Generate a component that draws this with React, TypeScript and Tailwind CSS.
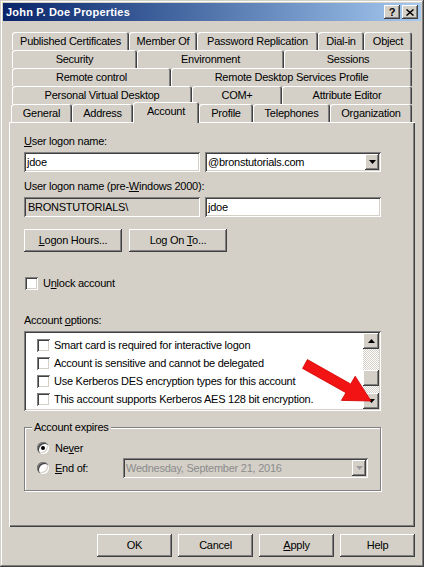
import React from "react";

const raised =
  "shadow-[inset_-1px_-1px_0_#404040,inset_1px_1px_0_#ffffff,inset_-2px_-2px_0_#808080,inset_2px_2px_0_#d4d0c8]";
const sunken =
  "shadow-[inset_1px_1px_0_#808080,inset_-1px_-1px_0_#ffffff,inset_2px_2px_0_#404040,inset_-2px_-2px_0_#d4d0c8]";
const checker =
  "bg-[image:repeating-conic-gradient(#ffffff_0%_25%,#d4d0c8_0%_50%)] bg-[length:2px_2px]";

function Tab({ label, w, selected }: { label: string; w: string; selected?: boolean }) {
  return (
    <div
      className={`${w} ${
        selected ? "h-[21px] -mb-[1px] relative z-10 pb-[3px]" : "h-[18px]"
      } shrink-0 flex items-center justify-center rounded-t-[3px] bg-[#d4d0c8] whitespace-nowrap shadow-[inset_1px_1px_0_#ffffff,inset_-1px_0_0_#404040,inset_-2px_0_0_#808080]`}
    >
      {label}
    </div>
  );
}

function Check() {
  return <div className={`w-[13px] h-[13px] shrink-0 bg-white ${sunken}`} />;
}

function Radio({ checked }: { checked?: boolean }) {
  return (
    <div className="w-[12px] h-[12px] shrink-0 rounded-full bg-white shadow-[inset_1px_1px_0_#808080,inset_2px_2px_0_#404040,inset_-1px_-1px_0_#ffffff,inset_-2px_-2px_0_#d4d0c8] flex items-center justify-center">
      {checked && <div className="w-[4px] h-[4px] rounded-full bg-black" />}
    </div>
  );
}

function Tri({ up, color = "#000000" }: { up?: boolean; color?: string }) {
  return (
    <svg width="7" height="4" viewBox="0 0 7 4">
      <polygon points={up ? "0,4 7,4 3.5,0" : "0,0 7,0 3.5,4"} fill={color} />
    </svg>
  );
}

function Btn({ children, w }: { children: React.ReactNode; w: string }) {
  return (
    <div className={`${w} h-[23px] shrink-0 flex items-center justify-center bg-[#d4d0c8] ${raised}`}>
      {children}
    </div>
  );
}

export default function App() {
  return (
    <div className="relative w-[424px] h-[567px] bg-[#d4d0c8] p-[3px] flex flex-col font-['Liberation_Sans',Arial,sans-serif] text-[11px] leading-[13px] tracking-[-0.25px] text-black shadow-[inset_-1px_-1px_0_#404040,inset_1px_1px_0_#d4d0c8,inset_-2px_-2px_0_#808080,inset_2px_2px_0_#ffffff]">
      {/* Title bar */}
      <div className="h-[18px] shrink-0 flex items-center justify-between pl-[3px] pr-[3px] bg-linear-to-r from-[#0a246a] to-[#a6caf0]">
        <span className="text-white font-bold tracking-[0.2px]">John P. Doe Properties</span>
        <div className="flex gap-[2px]">
          <div className={`w-[16px] h-[14px] bg-[#d4d0c8] flex items-center justify-center font-bold text-[11px] ${raised}`}>
            ?
          </div>
          <div className={`w-[16px] h-[14px] bg-[#d4d0c8] flex items-center justify-center ${raised}`}>
            <svg width="8" height="7" viewBox="0 0 8 7">
              <path d="M0.5 0.5 L7.5 6.5 M7.5 0.5 L0.5 6.5" stroke="#000" strokeWidth="1.5" />
            </svg>
          </div>
        </div>
      </div>

      {/* Tabs */}
      <div className="mt-[11px] ml-[6px] w-[406px] flex flex-col">
        <div className="ml-[3px] flex h-[18px]">
          <Tab label="Published Certificates" w="w-[117px]" />
          <Tab label="Member Of" w="w-[68px]" />
          <Tab label="Password Replication" w="w-[121px]" />
          <Tab label="Dial-in" w="w-[46px]" />
          <Tab label="Object" w="w-[48px]" />
        </div>
        <div className="ml-[3px] flex h-[18px]">
          <Tab label="Security" w="w-[125px]" />
          <Tab label="Environment" w="w-[147px]" />
          <Tab label="Sessions" w="w-[128px]" />
        </div>
        <div className="ml-[3px] flex h-[18px]">
          <Tab label="Remote control" w="w-[159px]" />
          <Tab label="Remote Desktop Services Profile" w="w-[241px]" />
        </div>
        <div className="ml-[3px] flex h-[18px]">
          <Tab label="Personal Virtual Desktop" w="w-[180px]" />
          <Tab label="COM+" w="w-[90px]" />
          <Tab label="Attribute Editor" w="w-[130px]" />
        </div>
        <div className="ml-[2px] flex h-[18px] items-end">
          <Tab label="General" w="w-[61px]" />
          <Tab label="Address" w="w-[61px]" />
          <Tab label="Account" w="w-[66px]" selected />
          <Tab label="Profile" w="w-[54px]" />
          <Tab label="Telephones" w="w-[77px]" />
          <Tab label="Organization" w="w-[82px]" />
        </div>

        {/* Panel */}
        <div className="h-[405px] pl-[15px] pt-[13px] flex flex-col shadow-[inset_1px_1px_0_#ffffff,inset_-1px_-1px_0_#404040,inset_-2px_-2px_0_#808080]">
          <div>
            <u>U</u>ser logon name:
          </div>
          <div className="mt-[4px] flex gap-[5px]">
            <div className={`w-[176px] h-[20px] bg-white pl-[3px] flex items-center ${sunken}`}>jdoe</div>
            <div className={`w-[176px] h-[20px] bg-white pl-[3px] pr-[2px] flex items-center justify-between ${sunken}`}>
              <span>@bronstutorials.com</span>
              <div className={`w-[14px] h-[16px] bg-[#d4d0c8] flex items-center justify-center ${raised}`}>
                <Tri />
              </div>
            </div>
          </div>
          <div className="mt-[8px]">
            User logon name (pre-<u>W</u>indows 2000):
          </div>
          <div className="mt-[4px] flex gap-[5px]">
            <div className={`w-[176px] h-[20px] bg-[#d4d0c8] pl-[4px] flex items-center ${sunken}`}>BRONSTUTORIALS\</div>
            <div className={`w-[176px] h-[20px] bg-white pl-[3px] flex items-center ${sunken}`}>jdoe</div>
          </div>
          <div className="mt-[12px] flex gap-[7px]">
            <Btn w="w-[98px]">
              <span>
                <u>L</u>ogon Hours...
              </span>
            </Btn>
            <Btn w="w-[98px]">
              <span>
                Log On <u>T</u>o...
              </span>
            </Btn>
          </div>
          <div className="mt-[25px] ml-[1px] flex items-center gap-[5px] h-[13px]">
            <Check />
            <span>
              U<u>n</u>lock account
            </span>
          </div>
          <div className="mt-[24px]">
            Account <u>o</u>ptions:
          </div>
          <div className={`mt-[4px] w-[357px] h-[80px] bg-white p-[2px] flex ${sunken}`}>
            <div className="flex-1 pl-[11px] pt-[3px] flex flex-col">
              {[
                "Smart card is required for interactive logon",
                "Account is sensitive and cannot be delegated",
                "Use Kerberos DES encryption types for this account",
                "This account supports Kerberos AES 128 bit encryption.",
              ].map((t) => (
                <div key={t} className="h-[18px] flex items-center gap-[4px] whitespace-nowrap">
                  <Check />
                  <span>{t}</span>
                </div>
              ))}
            </div>
            <div className="w-[16px] flex flex-col">
              <div className={`h-[16px] bg-[#d4d0c8] flex items-center justify-center ${raised}`}>
                <Tri up />
              </div>
              <div className={`h-[21px] ${checker}`} />
              <div className={`h-[16px] bg-[#d4d0c8] ${raised}`} />
              <div className={`flex-1 ${checker}`} />
              <div className={`h-[16px] bg-[#d4d0c8] flex items-center justify-center ${raised}`}>
                <Tri />
              </div>
            </div>
          </div>

          {/* Account expires group */}
          <div className="relative mt-[16px] w-[357px] border border-[#808080] shadow-[inset_1px_1px_0_#ffffff,1px_1px_0_#ffffff] pt-[10px] pb-[12px] pl-[12px]">
            <span className="absolute left-[7px] -top-[7px] px-[2px] bg-[#d4d0c8]">Account expires</span>
            <div className="h-[20px] flex items-center">
              <Radio checked />
              <span className="ml-[6px]">
                Ne<u>v</u>er
              </span>
            </div>
            <div className="h-[20px] flex items-center">
              <Radio />
              <span className="ml-[6px] w-[68px]">
                <u>E</u>nd of:
              </span>
              <div className={`w-[245px] h-[20px] bg-[#d4d0c8] pl-[3px] pr-[2px] flex items-center justify-between text-[#8c8c8c] ${sunken}`}>
                <span>Wednesday, September 21, 2016</span>
                <div className={`w-[14px] h-[16px] bg-[#d4d0c8] flex items-center justify-center ${raised}`}>
                  <Tri color="#9a9a9a" />
                </div>
              </div>
            </div>
          </div>
        </div>
      </div>

      {/* Bottom buttons */}
      <div className="mt-[7px] flex justify-end gap-[6px] pr-[6px]">
        <Btn w="w-[75px]">OK</Btn>
        <Btn w="w-[75px]">Cancel</Btn>
        <Btn w="w-[75px]">
          <span>
            <u>A</u>pply
          </span>
        </Btn>
        <Btn w="w-[75px]">Help</Btn>
      </div>

      {/* Red arrow annotation */}
      <svg className="absolute left-[296px] top-[350px] pointer-events-none" width="84" height="60" viewBox="0 0 84 60">
        <polygon
          points="6.6,18.4 11.4,9.6 54.7,34 59.2,26.2 75,51 45.4,50.4 49.9,42.7"
          fill="#f21414"
          stroke="#d00000"
          strokeWidth="0.8"
        />
      </svg>
    </div>
  );
}
